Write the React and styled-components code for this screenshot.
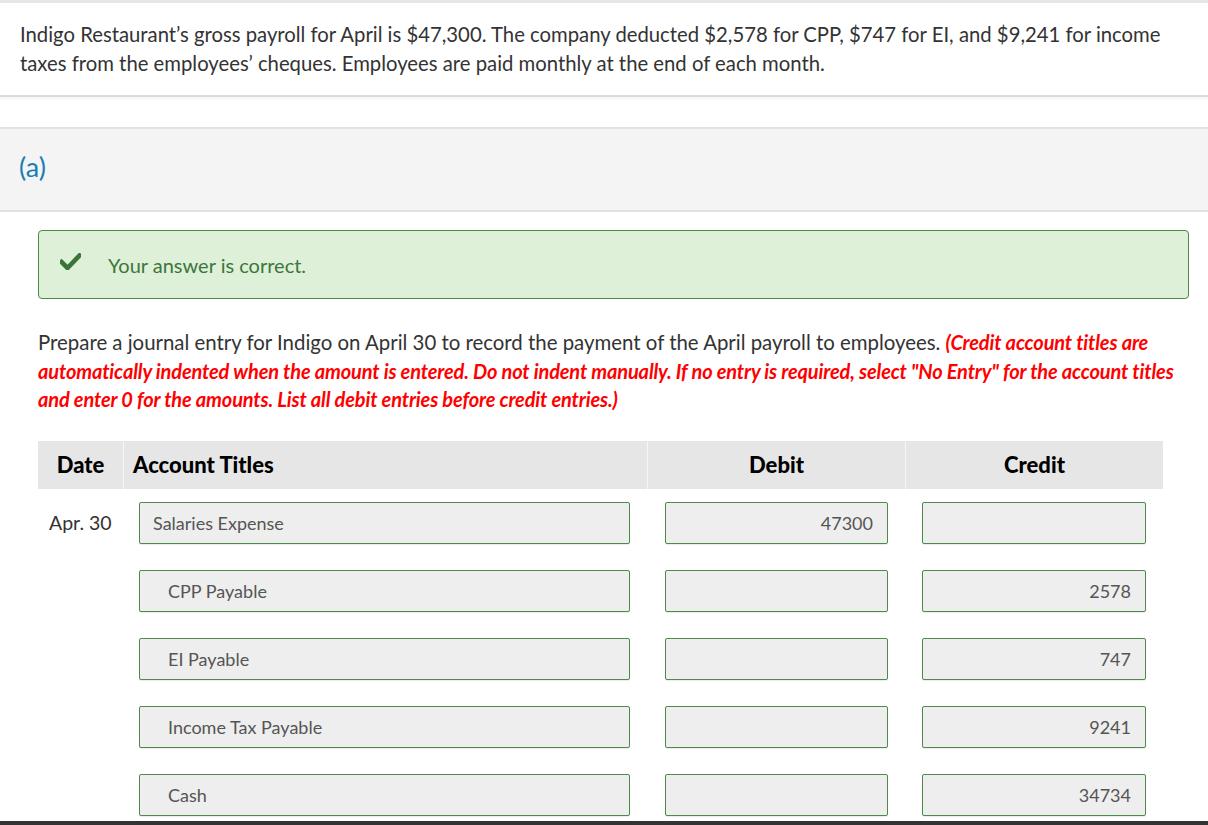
import React from 'react';
import styled, { createGlobalStyle } from 'styled-components';

const GlobalStyle = createGlobalStyle`
  html, body {
    margin: 0;
    padding: 0;
    background: #ffffff;
    font-family: Lato, "Open Sans", "Liberation Sans", sans-serif;
    color: #333333;
  }
`;

const Page = styled.div`
  width: 1208px;
  min-height: 825px;
  overflow: hidden;
`;

const ProblemCard = styled.div`
  border-top: 3px solid #e6e6e6;
  border-bottom: 2px solid #dcdcdc;
  box-shadow: 0 2px 2px rgba(0, 0, 0, 0.04);
  padding: 17px 20px 17px;
  font-size: 20.3px;
  line-height: 29px;
  color: #333333;
`;

const PartHeader = styled.div`
  margin-top: 30px;
  height: 85px;
  box-sizing: border-box;
  display: flex;
  align-items: center;
  padding: 0 0 6px 19px;
  background: #f4f4f4;
  border-top: 2px solid #e2e2e2;
  border-bottom: 2px solid #e2e2e2;
  font-size: 27px;
  color: #1b7db3;
`;

const Body = styled.div`
  padding: 18px 19px 0 38px;
`;

const SuccessBox = styled.div`
  height: 67px;
  display: flex;
  align-items: center;
  gap: 27px;
  padding-left: 21px;
  background: #dff0d8;
  border: 1px solid #4d8a48;
  border-radius: 4px;
  color: #3c763d;
  font-size: 20px;
`;

const CheckIcon = styled.svg`
  width: 21px;
  height: 17px;
  flex-shrink: 0;
  margin-top: -6px;
`;

const Prompt = styled.p`
  margin: 29px 0 0;
  font-size: 20.4px;
  line-height: 28.5px;
  color: #333333;
`;

const Instruction = styled.span`
  color: #ff0000;
  font-size: 20px;
  font-weight: 700;
  font-style: italic;
  letter-spacing: -0.15px;
`;

const Journal = styled.div`
  margin-top: 27px;
  width: 1125px;
  display: grid;
  grid-template-columns: 85px 524px 258px 258px;
  row-gap: 26px;
`;

const HeadCell = styled.div`
  height: 48px;
  background: #e6e6e6;
  display: flex;
  align-items: center;
  justify-content: ${({ align }) => (align === 'left' ? 'flex-start' : 'center')};
  padding-left: ${({ align }) => (align === 'left' ? '9px' : '0')};
  border-left: ${({ first }) => (first ? 'none' : '1px solid #f6f6f6')};
  font-size: 22px;
  font-weight: 900;
  color: #000000;
  margin-bottom: -13px;
`;

const DateCell = styled.div`
  display: flex;
  align-items: center;
  padding-left: 11px;
  height: 42px;
  font-size: 19.5px;
  color: #333333;
`;

const FieldCell = styled.div`
  padding: 0 ${({ right = 17 }) => right}px 0 ${({ left = 17 }) => left}px;
`;

const Field = styled.div`
  height: 40px;
  display: flex;
  align-items: center;
  justify-content: ${({ numeric }) => (numeric ? 'flex-end' : 'flex-start')};
  padding: 0 14px 0 ${({ indent }) => (indent ? '28px' : '13px')};
  background: #eeeeee;
  border: 1px solid #4e8a48;
  border-radius: 2px;
  box-shadow: 0 1px 1px rgba(0, 0, 0, 0.08);
  font-size: 18px;
  color: #555555;
`;

const BottomBar = styled.div`
  position: fixed;
  left: 0;
  right: 0;
  bottom: 0;
  height: 4px;
  background: #333333;
`;

const entries = [
  { date: 'Apr. 30', account: 'Salaries Expense', debit: '47300', credit: '' },
  { date: '', account: 'CPP Payable', debit: '', credit: '2578' },
  { date: '', account: 'EI Payable', debit: '', credit: '747' },
  { date: '', account: 'Income Tax Payable', debit: '', credit: '9241' },
  { date: '', account: 'Cash', debit: '', credit: '34734' }
];

export default function App() {
  return (
    <Page>
      <GlobalStyle />
      <ProblemCard>
        Indigo Restaurant’s gross payroll for April is $47,300. The company deducted $2,578 for CPP, $747 for EI, and
        $9,241 for income taxes from the employees’ cheques. Employees are paid monthly at the end of each month.
      </ProblemCard>

      <PartHeader>(a)</PartHeader>

      <Body>
        <SuccessBox>
          <CheckIcon viewBox="0 0 21 17">
            <path d="M1.5 9 L7.5 15 L19.5 2.5" fill="none" stroke="#3a7537" strokeWidth="4.6" strokeLinecap="square" />
          </CheckIcon>
          Your answer is correct.
        </SuccessBox>

        <Prompt>
          Prepare a journal entry for Indigo on April 30 to record the payment of the April payroll to employees.{' '}
          <Instruction>
            (Credit account titles are automatically indented when the amount is entered. Do not indent manually. If no
            entry is required, select "No Entry" for the account titles and enter 0 for the amounts. List all debit
            entries before credit entries.)
          </Instruction>
        </Prompt>

        <Journal>
          <HeadCell first>Date</HeadCell>
          <HeadCell align="left">Account Titles</HeadCell>
          <HeadCell>Debit</HeadCell>
          <HeadCell>Credit</HeadCell>

          {entries.map((row) => (
            <React.Fragment key={row.account}>
              <DateCell>{row.date}</DateCell>
              <FieldCell left={16} right={17}>
                <Field indent={row.credit !== ''}>{row.account}</Field>
              </FieldCell>
              <FieldCell left={18} right={17}>
                <Field numeric>{row.debit}</Field>
              </FieldCell>
              <FieldCell left={17} right={17}>
                <Field numeric>{row.credit}</Field>
              </FieldCell>
            </React.Fragment>
          ))}
        </Journal>
      </Body>
      <BottomBar />
    </Page>
  );
}
